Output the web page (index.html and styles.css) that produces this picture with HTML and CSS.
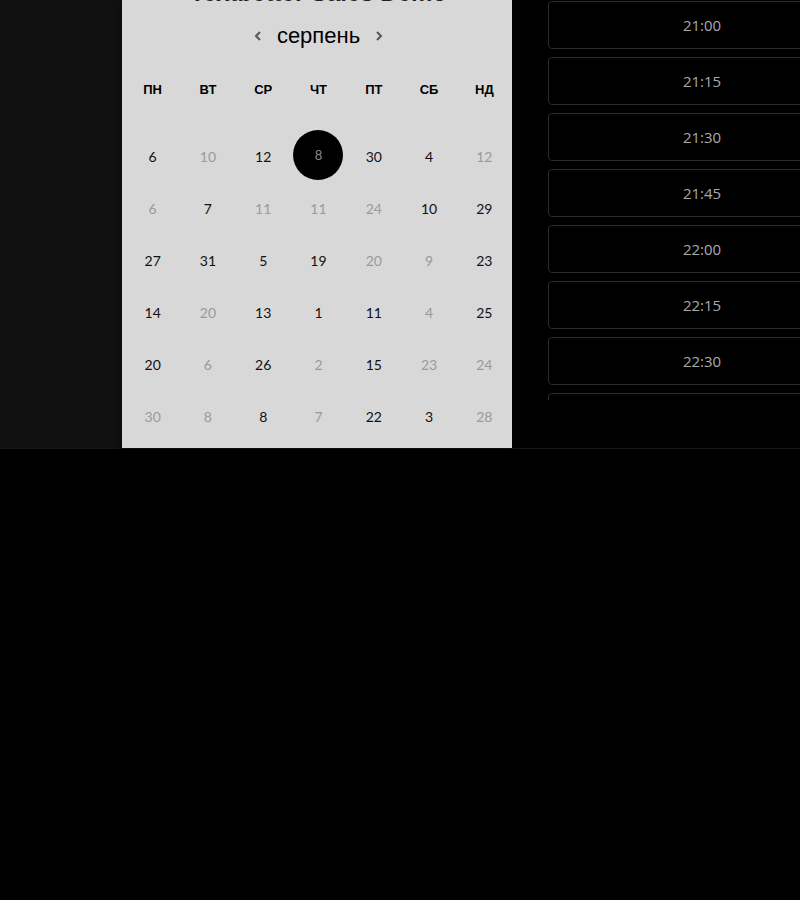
FILE: index.html
```html
<!DOCTYPE html>
<html lang="uk">
<head>
<meta charset="utf-8">
<title>Calendar</title>
<link rel="stylesheet" href="styles.css">
</head>
<body>
<div class="app">
  <div class="side"></div>
  <section class="calendar">
    <h1 class="title">Textbetter Sales Demo</h1>
    <div class="month">
      <svg class="chev" width="10" height="12" viewBox="0 0 10 12" aria-hidden="true"><path d="M7 2 L3 6 L7 10" fill="none" stroke="#555" stroke-width="2"/></svg>
      <span class="month-name">серпень</span>
      <svg class="chev" width="10" height="12" viewBox="0 0 10 12" aria-hidden="true"><path d="M3 2 L7 6 L3 10" fill="none" stroke="#555" stroke-width="2"/></svg>
    </div>
    <div class="weekdays">
      <span>ПН</span><span>ВТ</span><span>СР</span><span>ЧТ</span><span>ПТ</span><span>СБ</span><span>НД</span>
    </div>
    <div class="days">
      <span class="d">6</span><span class="d off">10</span><span class="d">12</span><span class="d sel"><i>8</i></span><span class="d">30</span><span class="d">4</span><span class="d off">12</span>
      <span class="d off">6</span><span class="d">7</span><span class="d off">11</span><span class="d off">11</span><span class="d off">24</span><span class="d">10</span><span class="d">29</span>
      <span class="d">27</span><span class="d">31</span><span class="d">5</span><span class="d">19</span><span class="d off">20</span><span class="d off">9</span><span class="d">23</span>
      <span class="d">14</span><span class="d off">20</span><span class="d">13</span><span class="d">1</span><span class="d">11</span><span class="d off">4</span><span class="d">25</span>
      <span class="d">20</span><span class="d off">6</span><span class="d">26</span><span class="d off">2</span><span class="d">15</span><span class="d off">23</span><span class="d off">24</span>
      <span class="d off">30</span><span class="d off">8</span><span class="d">8</span><span class="d off">7</span><span class="d">22</span><span class="d">3</span><span class="d off">28</span>
    </div>
  </section>
  <section class="times">
    <div class="slots">
      <div class="slot">21:00</div>
      <div class="slot">21:15</div>
      <div class="slot">21:30</div>
      <div class="slot">21:45</div>
      <div class="slot">22:00</div>
      <div class="slot">22:15</div>
      <div class="slot">22:30</div>
      <div class="slot"></div>
    </div>
  </section>
</div>
</body>
</html>
```

FILE: styles.css
```css
html, body {
  margin: 0;
  padding: 0;
  background: #000;
  overflow: hidden;
  width: 800px;
  height: 900px;
}

.app {
  display: flex;
  height: 448px;
  background: #111;
  border-bottom: 1px solid #161616;
}

.side {
  width: 122px;
  flex: none;
}

.calendar {
  width: 390px;
  flex: none;
  background: #d8d8d8;
  box-shadow: 0 3px 8px rgba(0, 0, 0, 0.6);
  padding: 0 0 6px 3px;
  box-sizing: border-box;
  font-family: "Liberation Sans", Arial, sans-serif;
  color: #000;
  position: relative;
  z-index: 1;
}

.title {
  margin: -19px 0 0;
  height: 24px;
  line-height: 24px;
  font-size: 24px;
  font-weight: 700;
  text-align: center;
  color: #222;
}

.month {
  margin-top: 19px;
  height: 24px;
  display: flex;
  align-items: center;
  justify-content: center;
  gap: 14px;
}

.month-name {
  font-size: 22px;
  line-height: 24px;
}

.chev {
  display: block;
}

.weekdays {
  margin-top: 32px;
  display: grid;
  grid-template-columns: repeat(7, 1fr);
  height: 20px;
  line-height: 20px;
  font-size: 13px;
  font-weight: 700;
  text-align: center;
}

.days {
  margin-top: 30px;
  display: grid;
  grid-template-columns: repeat(7, 1fr);
  grid-auto-rows: 52px;
  font-family: Lato, "Open Sans", sans-serif;
  font-size: 14px;
}

.d {
  display: flex;
  align-items: center;
  justify-content: center;
  color: #111;
}

.d.off {
  color: #9a9a9a;
}

.d.sel i {
  font-style: normal;
  width: 50px;
  height: 50px;
  border-radius: 50%;
  background: #000;
  color: #8a8a8a;
  display: flex;
  align-items: center;
  justify-content: center;
  font-size: 13px;
  margin-top: -2px;
}

.times {
  flex: 1;
  background: #000;
  padding-left: 36px;
  overflow: hidden;
}

.slots {
  margin-top: 1px;
  height: 399px;
  overflow: hidden;
}

.slot {
  width: 308px;
  height: 48px;
  box-sizing: border-box;
  border: 1px solid #2b2b2b;
  border-radius: 4px;
  margin-bottom: 8px;
  display: flex;
  align-items: center;
  justify-content: center;
  font-family: "Open Sans", "Noto Sans", sans-serif;
  font-size: 15px;
  color: #aaa;
}
```
